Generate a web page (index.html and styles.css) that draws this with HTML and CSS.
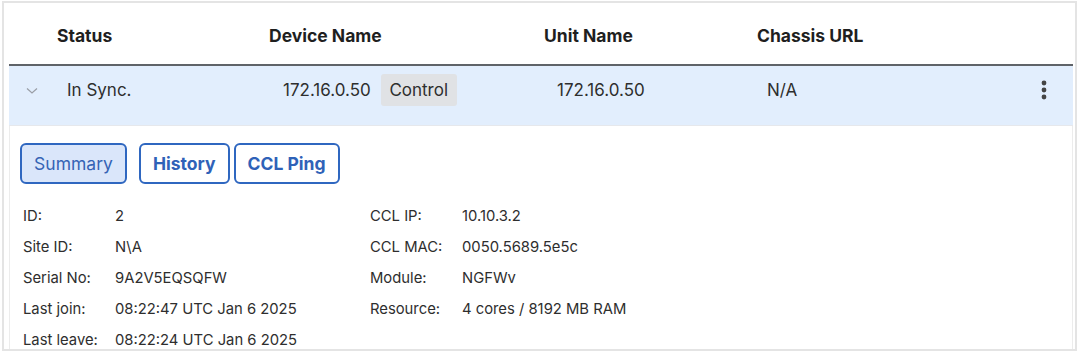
FILE: index.html
```html
<!DOCTYPE html>
<html lang="en">
<head>
<meta charset="utf-8">
<title>Devices</title>
<link rel="stylesheet" href="styles.css">
</head>
<body>
<div class="panel">
  <div class="grid head">
    <div></div>
    <div class="hc">Status</div>
    <div class="hc">Device Name</div>
    <div class="hc">Unit Name</div>
    <div class="hc">Chassis URL</div>
    <div></div>
  </div>
  <div class="grid row">
    <div class="chev">
      <svg width="12" height="8" viewBox="0 0 12 8"><polyline points="1,1.5 6,6 11,1.5" fill="none" stroke="#9a9ea6" stroke-width="1.2"/></svg>
    </div>
    <div class="c c-status">In Sync.</div>
    <div class="c c-dev">172.16.0.50 <span class="badge">Control</span></div>
    <div class="c c-unit">172.16.0.50</div>
    <div class="c c-ch">N/A</div>
    <div class="kebab">
      <svg width="6" height="20" viewBox="0 0 6 20"><circle cx="3" cy="3" r="2.4" fill="#444"/><circle cx="3" cy="10" r="2.4" fill="#444"/><circle cx="3" cy="17" r="2.4" fill="#444"/></svg>
    </div>
  </div>
  <div class="detail">
    <div class="tabs">
      <button class="tab active">Summary</button>
      <button class="tab">History</button>
      <button class="tab">CCL Ping</button>
    </div>
    <div class="info">
      <div class="col">
        <div class="kv"><span class="k">ID:</span><span class="v">2</span></div>
        <div class="kv"><span class="k">Site ID:</span><span class="v">N\A</span></div>
        <div class="kv"><span class="k">Serial No:</span><span class="v">9A2V5EQSQFW</span></div>
        <div class="kv"><span class="k">Last join:</span><span class="v">08:22:47 UTC Jan 6 2025</span></div>
        <div class="kv"><span class="k">Last leave:</span><span class="v">08:22:24 UTC Jan 6 2025</span></div>
      </div>
      <div class="col">
        <div class="kv"><span class="k">CCL IP:</span><span class="v">10.10.3.2</span></div>
        <div class="kv"><span class="k">CCL MAC:</span><span class="v">0050.5689.5e5c</span></div>
        <div class="kv"><span class="k">Module:</span><span class="v">NGFWv</span></div>
        <div class="kv"><span class="k">Resource:</span><span class="v">4 cores / 8192 MB RAM</span></div>
      </div>
    </div>
  </div>
</div>
</body>
</html>
```

FILE: styles.css
```css
* { box-sizing: border-box; }
html, body { margin: 0; padding: 0; background: #fff; }
body {
  font-family: Inter, "Noto Sans", sans-serif;
  color: #2b2b2b;
}
.panel {
  margin: 1px 2px 0 2px;
  height: 350px;
  border: 2px solid #e4e4e4;
  padding: 0 2px 0 5px;
  overflow: hidden;
}
.grid {
  display: grid;
  grid-template-columns: 48px 212px 275px 213px 1fr 60px;
  align-items: center;
}
.head {
  height: 63px;
  border-bottom: 2px solid #5f6368;
  font-weight: 700;
  font-size: 17.5px;
  color: #1f1f1f;
  padding-top: 4px;
}
.row {
  height: 60px;
  background: #e2eefd;
  font-size: 17px;
  color: #2e2e2e;
  border-bottom: 1px solid #e6e8ec;
  padding-bottom: 12px;
}
.chev { display: flex; justify-content: center; padding-top: 2px; margin-left: -2px; }
.c-status { padding-left: 10px; }
.c-dev { padding-left: 14px; display: flex; align-items: center; gap: 10px; }
.c-unit { padding-left: 13px; }
.c-ch { padding-left: 10px; }
.badge {
  background: #e0e2e5;
  border-radius: 3px;
  padding: 0 8px;
  height: 32px;
  line-height: 32px;
  width: 76px;
  text-align: center;
}
.kebab { display: flex; justify-content: flex-end; padding-right: 26px; }
.detail {
  border-left: 1px solid #ececec;
  border-right: 1px solid #ececec;
  padding: 17px 0 0 10px;
}
.tabs { display: flex; }
.tab {
  font-family: Inter, "Noto Sans", sans-serif;
  font-size: 17.5px;
  height: 41px;
  border: 2px solid #2f67c0;
  border-radius: 6px;
  background: #fff;
  color: #2f62b8;
  font-weight: 700;
  padding: 0 12px;
  margin-right: 4px;
}
.tab.active {
  background: #dae6fa;
  font-weight: 400;
  color: #3563b5;
  width: 107px;
  padding: 0;
  margin-right: 12px;
}
.info {
  display: flex;
  margin-top: 16px;
  padding-left: 3px;
  font-size: 14.8px;
  color: #2e2e2e;
}
.col { width: 347px; }
.kv { height: 31px; display: flex; align-items: center; }
.k { width: 92px; flex-shrink: 0; }
.v { white-space: nowrap; }
```
